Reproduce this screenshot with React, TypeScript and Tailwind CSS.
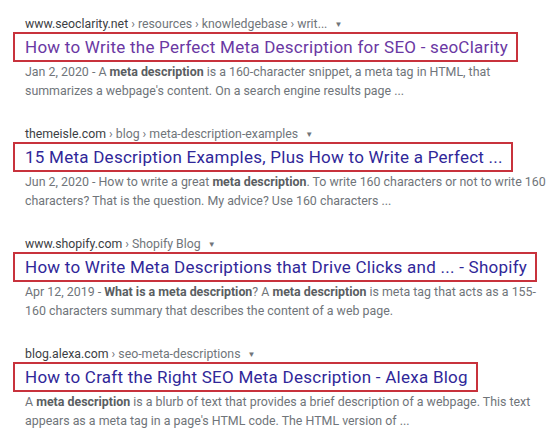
import React from 'react'

type Result = {
  domain: string
  crumbs: string
  title: string
  visited?: boolean
  lines: React.ReactNode[]
}

const B = ({ children }: { children: React.ReactNode }) => (
  <b className="font-bold text-[#5a5e62]">{children}</b>
)

const results: Result[] = [
  {
    domain: 'www.seoclarity.net',
    crumbs: ' › resources › knowledgebase › writ...',
    title: 'How to Write the Perfect Meta Description for SEO - seoClarity',
    visited: true,
    lines: [
      <>Jan 2, 2020 - A <B>meta description</B> is a 160-character snippet, a meta tag in HTML, that</>,
      <>summarizes a webpage's content. On a search engine results page ...</>
    ]
  },
  {
    domain: 'themeisle.com',
    crumbs: ' › blog › meta-description-examples',
    title: '15 Meta Description Examples, Plus How to Write a Perfect ...',
    lines: [
      <>Jun 2, 2020 - How to write a great <B>meta description</B>. To write 160 characters or not to write 160</>,
      <>characters? That is the question. My advice? Use 160 characters ...</>
    ]
  },
  {
    domain: 'www.shopify.com',
    crumbs: ' › Shopify Blog',
    title: 'How to Write Meta Descriptions that Drive Clicks and ... - Shopify',
    lines: [
      <>Apr 12, 2019 - <B>What is a meta description</B>? A <B>meta description</B> is meta tag that acts as a 155-</>,
      <>160 characters summary that describes the content of a web page.</>
    ]
  },
  {
    domain: 'blog.alexa.com',
    crumbs: ' › seo-meta-descriptions',
    title: 'How to Craft the Right SEO Meta Description - Alexa Blog',
    lines: [
      <>A <B>meta description</B> is a blurb of text that provides a brief description of a webpage. This text</>,
      <>appears as a meta tag in a page's HTML code. The HTML version of ...</>
    ]
  }
]

export default function App() {
  return (
    <div className="w-[555px] h-[443px] bg-white overflow-hidden pt-4 font-['Roboto',sans-serif]">
      {results.map((r) => (
        <div key={r.domain} className="mb-[26px]">
          <div className="pl-[25px] h-4 text-[12.3px] leading-4 whitespace-nowrap">
            <span className="text-[#3c4043]">{r.domain}</span>
            <span className="text-[#70757a]">{r.crumbs}</span>
            <span className="text-[#70757a] text-[8px] ml-[7px] align-[1px]">▼</span>
          </div>
          <div className="pl-[13px]">
            <div
              className={`inline-block h-[30px] border-2 border-[#c8323c] pl-[10px] pr-[8px] text-[17px] leading-[26px] tracking-[0.25px] whitespace-nowrap ${
                r.visited ? 'text-[#6a38a3]' : 'text-[#302799]'
              }`}
            >
              {r.title}
            </div>
          </div>
          <div className="pl-[25px] text-[12.4px] leading-[19px] text-[#70757a] whitespace-nowrap">
            {r.lines.map((l, i) => (
              <div key={i}>{l}</div>
            ))}
          </div>
        </div>
      ))}
    </div>
  )
}
